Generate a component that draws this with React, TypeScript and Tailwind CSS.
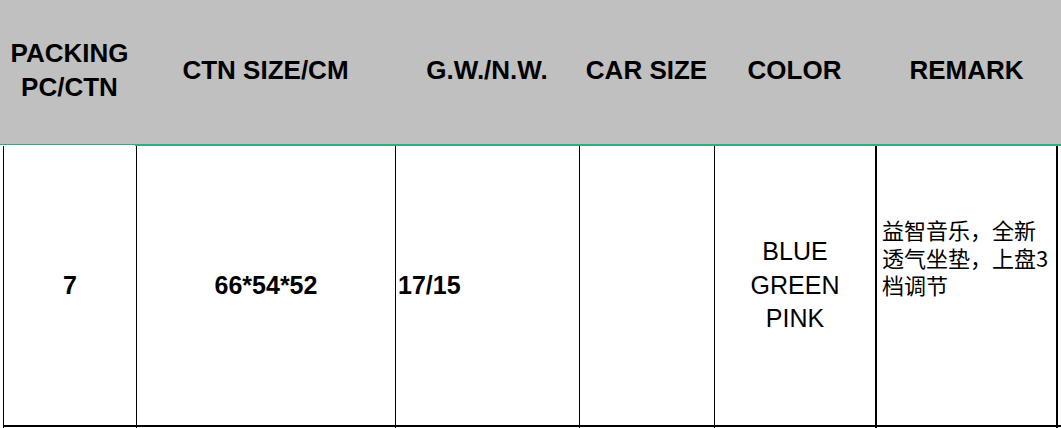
import React from "react";

const sans = { fontFamily: '"Liberation Sans", Arial, sans-serif' };

export default function App() {
  return (
    <div className="w-[1061px] h-[428px] overflow-hidden bg-white text-black" style={sans}>
      {/* header */}
      <div className="flex h-[144px] bg-[#c0c0c0] font-bold text-[26px] leading-[34px] text-center">
        <div className="ml-[3px] w-[133px] flex items-center justify-center pb-[5px]">
          <span>PACKING<br />PC/CTN</span>
        </div>
        <div className="w-[259px] flex items-center justify-center pb-[5px]">CTN SIZE/CM</div>
        <div className="w-[184px] flex items-center justify-center pb-[5px]">G.W./N.W.</div>
        <div className="w-[135px] flex items-center justify-center pb-[5px]">CAR SIZE</div>
        <div className="w-[161px] flex items-center justify-center pb-[5px]">COLOR</div>
        <div className="w-[183px] flex items-center justify-center pb-[5px]">REMARK</div>
        <div className="flex-1" />
      </div>
      {/* green selection line */}
      <div className="flex h-[2px]">
        <div className="w-[135px] border-t border-[#2fae7b]" />
        <div className="flex-1 bg-[#2fae7b]" />
      </div>
      {/* body row */}
      <div className="flex h-[281px]">
        <div className="ml-[3px] w-[133px] border-l border-b-2 border-black flex items-center justify-center font-bold text-[25px]">
          7
        </div>
        <div className="w-[259px] border-l border-b-2 border-black flex items-center justify-center font-bold text-[25px]">
          66*54*52
        </div>
        <div className="w-[184px] border-l border-b-2 border-black flex items-center pl-[2px] font-bold text-[25px]">
          17/15
        </div>
        <div className="w-[135px] border-l border-b-2 border-black" />
        <div className="w-[161px] border-l border-b-2 border-black flex items-center justify-center text-center text-[25px] leading-[33.5px]">
          <span>BLUE<br />GREEN<br />PINK</span>
        </div>
        <div
          className="w-[183px] border-l-2 border-r-2 border-b-2 border-black pl-[5px] pt-[70px] text-[22px] leading-[27.5px] whitespace-nowrap"
          style={{ fontFamily: '"Noto Sans CJK SC", "Liberation Serif", serif' }}
        >
          益智音乐，全新<br />透气坐垫，上盘3<br />档调节
        </div>
        <div className="flex-1 border-b-2 border-black" />
      </div>
      {/* next row start */}
      <div className="flex h-[20px]">
        <div className="ml-[3px] w-[133px] border-l border-black" />
        <div className="w-[259px] border-l border-black" />
        <div className="w-[184px] border-l border-black" />
        <div className="w-[135px] border-l border-black" />
        <div className="w-[161px] border-l border-black" />
        <div className="w-[183px] border-l-2 border-r-2 border-black" />
      </div>
    </div>
  );
}
